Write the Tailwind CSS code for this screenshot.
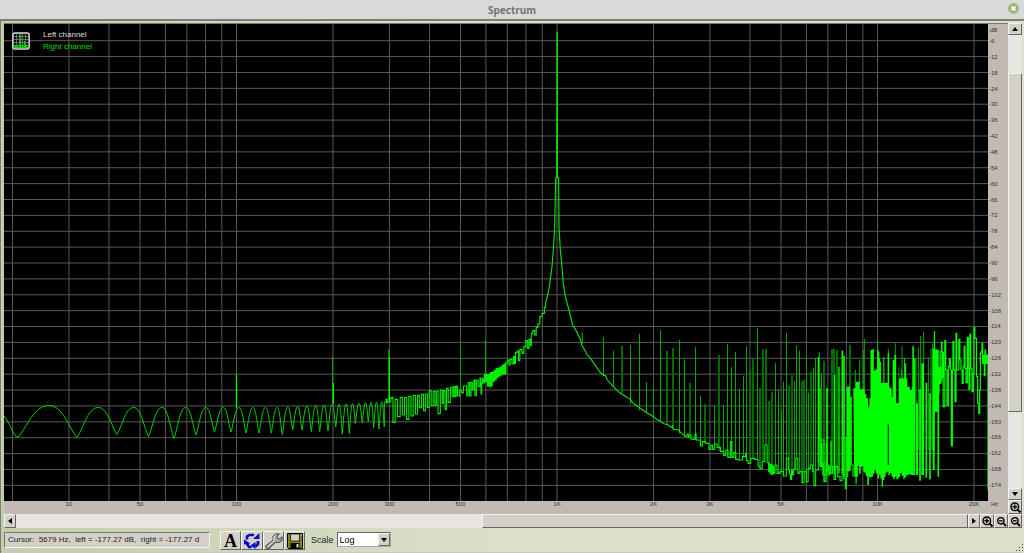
<!DOCTYPE html>
<html lang="en">
<head>
<meta charset="utf-8">
<title>Spectrum</title>
<script src="https://cdn.jsdelivr.net/npm/@tailwindcss/browser@4"></script>
</head>
<body class="flex h-screen flex-col overflow-hidden bg-[#d8d8d8] font-['Liberation_Sans',sans-serif] text-black">
<header class="relative flex h-[19px] shrink-0 items-center justify-center bg-[#d9d9d9]">
  <h1 class="font-['Noto_Sans',sans-serif] text-[10px] leading-4 font-bold text-[#747474]">Spectrum</h1>
  <button aria-label="Close" class="absolute top-[3px] right-[5px] size-[11px]">
    <svg viewBox="0 0 11 11" class="size-full"><circle cx="5.5" cy="5.5" r="5.4" fill="#9ab87c"/><path d="M3.6 3.6l3.8 3.8M7.4 3.6L3.6 7.4" stroke="#fff" stroke-width="1.7"/></svg>
  </button>
</header>
<main class="flex min-h-0 flex-1 flex-col border-t-2 border-l border-[#7d7d76] bg-linear-to-r from-[#c3cfaa] via-[#dbe1ca] via-50% to-[#dce1cc] pt-[2px] pr-[2px] pl-[3px]">
  <div class="flex min-h-0 flex-1">
    <div class="flex min-w-0 flex-1 flex-col bg-[#c0bab3]">
      <div class="flex min-h-0 flex-1 border-t border-[#77776f]">
        <section aria-label="Spectrum plot" class="relative min-w-0 flex-1 bg-black">
          <svg class="absolute inset-0 size-full" viewBox="4 24 984 477" preserveAspectRatio="none" fill="none">
            <g id="grid" stroke="#595959" stroke-width="1"></g>
            <g id="spikes" stroke="#00ac00" stroke-width="1"></g>
            <g id="dim" stroke="#006c00" stroke-width="2"></g>
            <g id="bars" stroke="#00ff00"></g>
            <path id="mass" fill="#00ff00"/>
            <path d="M888.3 424.5V465" stroke="#000" stroke-width="1"/>
            <path id="lobes" stroke="#00d400" stroke-width="1"/>
            <path id="trace" stroke="#00ee00" stroke-width="1.1"/>
            <path id="tail" stroke="#00ff00" stroke-width="1.2"/>
          </svg>
          <button aria-label="Spectrum view" class="absolute top-2 left-2 size-[18px]">
            <svg viewBox="0 0 18 18" class="size-full" fill="none"><rect x=".9" y=".9" width="16.2" height="16.2" rx="2" fill="#080808" stroke="#ddd" stroke-width="1.5"/><path d="M4.5 2v13M7.5 2v13M10.500 2v13M13.500 2v13M2 4.500h14M2 7.500h14M2 10.500h14M2 13.500h14" stroke="#808080" stroke-width=".8"/><path d="M8.500 2.500v13M12.500 9v6.500" stroke="#00c800" stroke-width="1.400"/><path d="M2 15.800V15h1v-1.500h1V15h1.500v-1.500h1V15h3.500v-1.500h1V15h2.500v-2h1v2H16v.8z" fill="#00e800" stroke="#00e800" stroke-width=".6"/></svg>
          </button>
          <div class="absolute top-[5px] left-[39px] text-[8px] leading-3">
            <div class="text-[#dedede]">Left channel</div>
            <div class="text-[#00df00]">Right channel</div>
          </div>
        </section>
        <div class="flex w-5 flex-col text-[6px] leading-[6px] text-[#333]">
          <div class="flex h-[9px] shrink-0 items-end pl-[2px]">dB</div>
          <div id="levels" class="flex min-h-0 flex-1 flex-col"></div>
          <div class="h-2 shrink-0"></div>
        </div>
      </div>
      <div class="flex h-[13px] shrink-0 text-[6px] leading-[6px] text-[#333]">
        <div id="freqs" class="relative flex-1"></div>
        <div class="w-5 pl-[3px]">Hz</div>
      </div>
    </div>
    <div class="flex w-[14px] shrink-0 flex-col bg-[#e8e6e2]">
      <button aria-label="Scroll up" class="flex h-3 items-center justify-center border border-t-[#f6f4f0] border-r-[#666] border-b-[#666] border-l-[#f6f4f0] bg-[#d4d0c8]"><svg viewBox="0 0 6 4" class="h-1 w-[6px]"><path d="M3 0l3 4H0z"/></svg></button>
      <div class="min-h-0 flex-1 pt-[38px] pb-[76px]"><div class="h-full border border-t-[#f6f4f0] border-r-[#666] border-b-[#666] border-l-[#f6f4f0] bg-[#d4d0c8]"></div></div>
      <button aria-label="Scroll down" class="flex h-3 items-center justify-center border border-t-[#f6f4f0] border-r-[#666] border-b-[#666] border-l-[#f6f4f0] bg-[#d4d0c8]"><svg viewBox="0 0 6 4" class="h-1 w-[6px]"><path d="M0 0h6L3 4z"/></svg></button>
      <button aria-label="Zoom in vertically" class="flex h-[14px] items-center justify-center border border-t-[#f6f4f0] border-r-[#666] border-b-[#666] border-l-[#f6f4f0] bg-[#d4d0c8]"><svg viewBox="0 0 11 11" class="size-[11px]" fill="none" stroke="#000" stroke-width="1.400"><circle cx="4.800" cy="4.800" r="3.800"/><path d="M4.800 2.500v4.600M2.500 4.800h4.600"/><path d="M7.600 7.600l2.800 2.800" stroke-width="2"/></svg></button>
    </div>
  </div>
  <div class="flex h-[14px] shrink-0 bg-[#e8e6e2]">
    <button aria-label="Scroll left" class="flex w-3 items-center justify-center border border-t-[#f6f4f0] border-r-[#666] border-b-[#666] border-l-[#f6f4f0] bg-[#d4d0c8]"><svg viewBox="0 0 4 6" class="h-[6px] w-1"><path d="M4 0v6L0 3z"/></svg></button>
    <div class="flex min-w-0 flex-1 justify-end"><div class="w-[51%] border border-t-[#f6f4f0] border-r-[#666] border-b-[#666] border-l-[#f6f4f0] bg-[#d4d0c8]"></div></div>
    <button aria-label="Scroll right" class="flex w-3 items-center justify-center border border-t-[#f6f4f0] border-r-[#666] border-b-[#666] border-l-[#f6f4f0] bg-[#d4d0c8]"><svg viewBox="0 0 4 6" class="h-[6px] w-1"><path d="M0 0l4 3-4 3z"/></svg></button>
    <button aria-label="Zoom in horizontally" class="flex w-[14px] items-center justify-center border border-t-[#f6f4f0] border-r-[#666] border-b-[#666] border-l-[#f6f4f0] bg-[#d4d0c8]"><svg viewBox="0 0 11 11" class="size-[11px]" fill="none" stroke="#000" stroke-width="1.400"><circle cx="4.800" cy="4.800" r="3.800"/><path d="M4.800 2.500v4.600M2.500 4.800h4.600"/><path d="M7.600 7.600l2.800 2.800" stroke-width="2"/></svg></button>
    <button aria-label="Zoom out horizontally" class="flex w-[14px] items-center justify-center border border-t-[#f6f4f0] border-r-[#666] border-b-[#666] border-l-[#f6f4f0] bg-[#d4d0c8]"><svg viewBox="0 0 11 11" class="size-[11px]" fill="none" stroke="#000" stroke-width="1.300"><circle cx="4.800" cy="4.800" r="3.200"/><path d="M3 4.800h3.600"/><path d="M7.200 7.200l2.800 2.800" stroke-width="1.800"/></svg></button>
    <button aria-label="Zoom out vertically" class="flex w-[14px] items-center justify-center border border-t-[#f6f4f0] border-r-[#666] border-b-[#666] border-l-[#f6f4f0] bg-[#d4d0c8]"><svg viewBox="0 0 11 11" class="size-[11px]" fill="none" stroke="#000" stroke-width="1.300"><circle cx="4.800" cy="4.800" r="3.200"/><path d="M3 4.800h3.600"/><path d="M7.200 7.200l2.800 2.800" stroke-width="1.800"/></svg></button>
  </div>
  <footer class="relative flex h-[25px] shrink-0 items-start border-b border-[#c9c9c2] pt-[3px]">
    <output class="mt-px h-4 w-[206px] border border-t-[#777] border-r-[#f4f4ee] border-b-[#f4f4ee] border-l-[#777] bg-[#d4d0c8] pl-[3px] text-[8px] leading-[14px] whitespace-pre text-[#222]">Cursor:  5679 Hz,  left = -177.27 dB,  right = -177.27 d</output>
    <div class="ml-[10px] flex">
      <button aria-label="Font" class="h-[19px] w-[21px] border border-t-[#f6f4f0] border-r-[#666] border-b-[#666] border-l-[#f6f4f0] bg-[#d4d0c8] text-center font-['Liberation_Serif',serif] text-[18px] leading-[18px] font-bold">A</button>
      <button aria-label="Refresh" class="flex h-[19px] w-[22px] items-center justify-center border border-t-[#f6f4f0] border-r-[#666] border-b-[#666] border-l-[#f6f4f0] bg-[#d4d0c8]"><svg viewBox="0 0 16 16" class="size-4" fill="#0808cc"><path d="M3 6.500V3.500L5.500 2H10" fill="none" stroke="#0808cc" stroke-width="2.600"/><path d="M9 6h6.500V0z"/><path d="M14 8v3l-2.500 2.500" fill="none" stroke="#0808cc" stroke-width="2.800"/><path d="M11.500 9v7L6.500 12.500z"/><path d="M7.500 14H5L2.800 10.500" fill="none" stroke="#0808cc" stroke-width="2.600"/><path d="M0 11.500V6.500l6.500 4z"/></svg></button>
      <button aria-label="Settings" class="flex h-[19px] w-[21px] items-center justify-center border border-t-[#f6f4f0] border-r-[#666] border-b-[#666] border-l-[#f6f4f0] bg-[#d4d0c8]"><svg viewBox="0 0 18 16" class="h-4 w-[18px]"><path d="M1.500 12.500L8 7.500V3.500L11 1h3l-2 2.500.5 2 2 .5L17 4v3l-2.500 2.500H10L4 15.500H2L.8 14z" fill="#aaa" stroke="#555" stroke-width="1.100"/><path d="M2.500 13.500L9 8V4l2-2" fill="none" stroke="#eee" stroke-width="1"/></svg></button>
      <button aria-label="Save" class="flex h-[19px] w-[21px] items-center justify-center border border-t-[#f6f4f0] border-r-[#666] border-b-[#666] border-l-[#f6f4f0] bg-[#d4d0c8]"><svg viewBox="0 0 16 16" class="size-4"><path d="M.5.500h15v15h-14l-1-1z" fill="#848410" stroke="#000"/><path d="M3.500 1h9v7h-9z" fill="#d4d0c8" stroke="#000" stroke-width=".7"/><path d="M3.500 10h9v5.500h-9z"/><path d="M9.500 11h2v3.500h-2z" fill="#ddd"/><path d="M13.700 1.500h1v1h-1z" fill="#eee"/></svg></button>
    </div>
    <label for="scale" class="ml-[6px] text-[9px] leading-[18px] text-[#222]">Scale</label>
    <div class="relative mt-px ml-[3px] flex h-[15px] w-[54px]">
      <select id="scale" class="h-[15px] min-w-0 flex-1 appearance-none border border-t-[#666] border-r-[#aaa] border-b-[#aaa] border-l-[#666] bg-white pl-[2px] text-[9px] leading-3"><option>Log</option><option>Linear</option></select>
      <span class="pointer-events-none absolute top-px right-px flex h-[13px] w-3 items-center justify-center border border-t-[#f6f4f0] border-r-[#666] border-b-[#666] border-l-[#f6f4f0] bg-[#d4d0c8]"><svg viewBox="0 0 6 4" class="h-1 w-[6px]"><path d="M0 0h6L3 4z"/></svg></span>
    </div>
    <svg viewBox="0 0 9 9" class="absolute right-[-2px] bottom-0 size-[9px]" fill="#444"><path d="M7 1h1v1H7zM4 4h1v1H4zM7 4h1v1H7zM1 7h1v1H1zM4 7h1v1H4zM7 7h1v1H7z"/></svg>
  </footer>
</main>
<script>
const el = id => document.getElementById(id);
const fx = hz => 236.5 + 320.5 * Math.log10(hz / 100);
const vline = (x, a, b, w) => `<path d="M${x} ${a}V${b}"${w ? ` stroke-width="${w}"` : ''}/>`;

// Grid and axis labels
let g = '';
for (let d = 10; d <= 10000; d *= 10) for (let n = 1; n < 10; n++) {
  const f = d * n;
  if (f >= 20 && f <= 20000) g += vline(fx(f), 24, 501);
}
let lv = '';
for (let i = 1; i <= 29; i++) {
  const y = 40.7 + (i - 1) * 15.88;
  g += `<path d="M4 ${y}H988"/>`;
  lv += `<div class="flex min-h-0 flex-1 items-center pl-px">-${i * 6}</div>`;
}
el('grid').innerHTML = g;
el('levels').innerHTML = lv;
el('freqs').innerHTML = [30, 50, 100, 200, 300, 500, 1000, 2000, 3000, 5000, 10000, 20000].map(f =>
  `<span class="absolute top-0 -translate-x-1/2" style="left:${(fx(f) - 4) / 984 * 100}%">${f < 1000 ? f : f / 1000 + 'K'}</span>`).join('');

// Side lobes below 400 Hz: [minimum x, minimum y]
const mins = [[18,437],[77,437.500],[117,434.500],[148.500,436.500],[174,438.500],[196,435],[214.500,432],[231,432],[246,433],[259,433],[271.300,433],[282.300,434.500],[292.700,430],[302,430],[311.300,431.500],[319.700,431.500],[328,431],[335.700,427],[342.300,434],[349.300,433.500],[355.300,423.500],[362.300,423],[368.300,421.500],[373.700,427.500],[379,429],[384.300,427]];
let p = 'M4 416C9 420 13 437 18 437';
for (let i = 0; i < mins.length - 1; i++) {
  const [a, b] = mins[i], [c, d] = mins[i + 1];
  const m = i ? (a + c) / 2 + (c - a) * .03 : 49, w = m - a, v = c - m;
  const top = i ? 407.500 - Math.max(0, m - 280) * .055 : 405.500;
  p += `C${a + .3 * w} ${b - .3 * (b - top)} ${a + .5 * w} ${top} ${m} ${top}C${c - .5 * v} ${top} ${c - .3 * v} ${d - .3 * (d - top)} ${c} ${d}`;
}
el('lobes').setAttribute('d', p + 'V402H388');

// Points are listed in thirds of a unit from a local origin
const pts = (s, ox, oy) => s.trim().split(/\s+/).map(q => { const [x, y] = q.split(',').map(Number); return [ox + x / 3, oy + y / 3]; });
const line = a => a.map(q => 'L' + q.join(' ')).join('');
// One column per point, joined by vertical edges half way between
const step = a => a.map((q, i) => i ? `H${(a[i - 1][0] + q[0]) / 2}V${q[1]}` : `L${q[0]} ${q[1]}`).join('');

const rise = pts('438,208 445,216 450,215 455,203 463,277 468,208 477,260 484,202 490,255 497,203 503,268 510,199 516,258 523,196 530,252 535,196 541,233 548,193 553,242 559,192 565,232 570,182 577,228 582,185 587,226 591,184 597,251 605,180 608,220 612,182 618,238 621,175 628,217 634,172 639,200 643,170 647,200 650,168 655,198 662,180 668,188 673,168 677,168 683,198 686,158 692,198 694,157 700,180 703,150 707,197 711,150 718,170 722,144 724,192', 240, 330);
const mid = pts('126,250 130,235 132,248 135,222 138,244 141,224 144,258 147,224 149,260 152,218 155,258 158,216 161,244 164,212 167,240 170,206 173,232 176,204 179,228 182,201 185,225 188,196 191,222 194,192 196,222 199,188 205,180 208,195 213,178 219,192 222,170 225,190 228,158 234,153 237,182 242,148 250,160 253,140 262,122 264,145 270,118 272,137 276,100 280,92 288,105 289,82 298,72 301,50 312,40 314,22 320,10', 440, 300);
const peak = pts('143,825 148,800 152,770 156,740 160,690 164,620 167,475 170,470 171,48 172,35 172,470 176,475 177,620 181,690 186,740 190,790 196,830 207,870 217,912 230,935 242,960', 500, 20);
const fall = pts('425,135 434,150 442,165 450,173 462,190 474,208 485,222 497,228 502,240 520,260 534,274 545,282 558,290 570,298 582,312 595,320 608,330 620,338 632,345 640,350 650,358 660,364 672,371 685,375 692,382 697,378 700,388 715,390 725,400 737,410 744,402', 440, 300);
const floor = pts('144,382 150,375 155,387 162,388 168,372 169,390 178,390 184,408 190,395 204,400 210,418 215,405 220,418 228,402 235,412 248,424 255,436 260,420 268,442 274,395 278,442 285,428 290,448 300,450 315,440 318,430 320,452 328,460 336,445 352,448 356,468 363,475 370,455 379,405 384,458 388,485 390,462 392,490 394,464 396,493 400,468 403,490 407,465 415,490 425,485 435,498 443,445 447,480 450,492 453,508 456,480 459,495 463,478 472,445 475,490 484,485 490,518 495,485 503,515 506,475 516,465 520,485 524,527 530,480 540,390 542,470 545,400 548,470 557,515 560,400 562,495', 640, 310);
const low = pts('25,465 27,495 32,470 34,490 41,470 43,508 50,470 56,500 64,512 68,485 74,505 78,535 80,500 86,480 95,465 103,500', 820, 310);
const head = pts('2,390 3,470 8,460 9,495 16,515 19,455 24,470', 820, 310);
el('trace').setAttribute('d', 'M387 404' + step([...rise, ...mid]) + line([...peak, ...fall]) + step([...floor, ...head, ...low]));

// Height of the noise floor at x
const under = [...fall, ...floor];
const base = x => { for (let i = 1; i < under.length; i++) if (under[i][0] >= x) return under[i][1]; return 470; };

// Harmonic spikes
let sp = '', dm = '', br = '';
sp += vline(236.500, 374, 408, 1.500) + vline(332.500, 357, 405) + vline(389, 349, 402, 1.500) + vline(460.500, 343.500, 390) + vline(485.500, 340, 375);
br += vline(236.500, 375, 408, 1) + vline(333.500, 383, 404, 1) + vline(389.500, 357, 400, 1);
for (const [x, y] of pts('427,98', 440, 300)) sp += vline(x, y, 344);
for (const [x, y] of pts('491,112 520,153 571,135 597,102', 440, 300)) sp += vline(Math.floor(x) + .5, y, base(x));
dm += vline(622, 346, 393, 2);
for (const [x, y] of pts('19,217 40,235 60,60 118,90 133,148 166,112 181,258 223,288 250,286 262,102 275,171 286,126 298,238 310,198 319,109 351,55 405,160 415,240 424,300 431,215 439,70 463,212 469,107 478,123 499,135 506,248 520,174 526,145 538,128 545,190', 640, 310)) sp += vline(Math.floor(x) + .5, y, base(x));
for (const [x, y] of pts('81,123 99,114 150,219 195,283 236,135 331,180 340,145 360,234 369,118 378,117 388,273 397,247 446,228 456,196 486,214 492,210 513,185 552,153', 640, 310)) dm += vline(Math.round(x), y, base(x));
for (const [x, y] of pts('12,153 35,117 41,117 52,120 90,105', 820, 310)) dm += vline(Math.round(x), y, 468);
for (const [x, y] of pts('4,190 106,180 119,150 130,120 133,87 173,92 205,117 226,100 246,108 280,105 288,145 295,112 302,78 311,65 325,142 333,117 338,100 343,65', 820, 310)) sp += vline(x, y, 450);
el('spikes').innerHTML = sp;
el('dim').innerHTML = dm;

// Solid bars: [x, width, top, bottom] in thirds
for (const [x, w, a, b] of [[-5,4,140,455],[0,4,235,470],[21,5,234,485],[33,4,392,470],[44,4,195,490],[57,4,170,490],[67,5,122,490],[72,5,137,500],[78,4,380,538],[85,10,230,484],[93,5,260,465],[283,6,145,495],[291,6,280,495],[300,5,238,512],[308,8,160,495],[319,5,218,503],[330,5,250,508],[341,6,115,480],[349,12,120,305],[355,5,170,500],[361,8,170,220],[369,6,125,205]])
  br += vline(820 + x / 3, 310 + a / 3, 310 + b / 3, w / 3);
el('bars').innerHTML = br;

// Dense high-frequency block
const mass = pts('100,235 106,235 108,215 118,215 120,238 133,238 136,252 142,265 146,292 150,265 153,120 160,118 163,182 170,178 173,120 178,125 178,145 182,155 184,218 190,218 190,142 192,142 194,218 203,218 203,130 207,130 208,230 213,235 217,262 219,150 222,150 224,135 228,135 229,280 236,278 236,170 239,205 244,205 245,180 248,205 252,205 253,145 257,160 260,205 264,230 275,240 276,230 278,110 281,110 281,495 275,495 270,493 262,495 256,502 252,508 248,498 243,490 238,502 232,508 226,500 222,508 217,500 212,490 207,496 203,485 199,488 195,500 191,510 187,530 183,505 179,495 175,505 170,490 165,480 162,490 158,500 150,502 144,525 140,498 136,490 132,485 128,468 124,470 120,492 115,468 112,500 108,522 105,500 100,485', 820, 310);
el('mass').setAttribute('d', 'M' + mass[0].join(' ') + step(mass) + 'Z');

const tail = pts('343,65 344,120 347,305 352,120 356,250 358,220 363,125 366,97 366,208 373,290 376,92 378,180 384,287 386,170 390,147 392,180 396,408 398,180 400,95 403,180 407,275 409,70 411,180 415,180 418,88 421,150 425,180 428,220 431,170 434,108 436,175 440,218 444,82 446,175 448,238 451,72 453,175 459,245 461,190 463,52 466,85 468,85 471,200 475,280 478,310 480,240 482,130 485,125 487,100 489,160 492,135 494,197 496,120 498,160 500,135 502,160 503,135 504,160 504,540', 820, 310);
el('tail').setAttribute('d', 'M' + tail[0].join(' ') + step(tail));
</script>
</body>
</html>
